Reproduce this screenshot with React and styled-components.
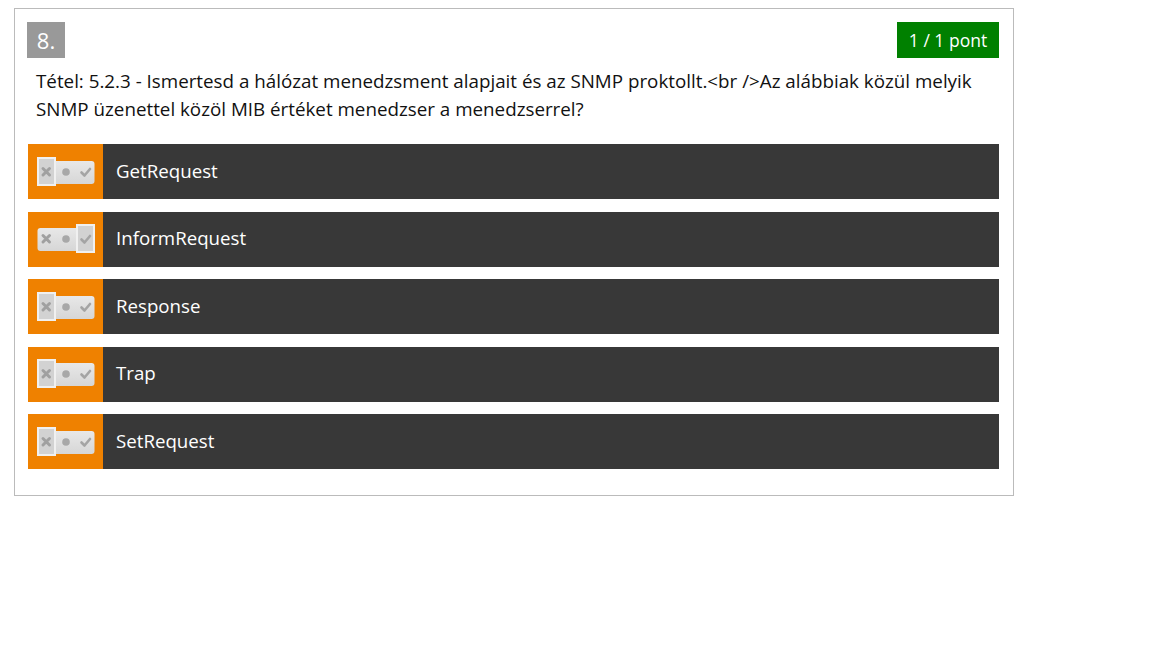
import React from "react";
import styled, { createGlobalStyle } from "styled-components";

const GlobalStyle = createGlobalStyle`
  body {
    margin: 0;
    background: #fff;
    font-family: "Open Sans", "Liberation Sans", sans-serif;
  }
`;

const Page = styled.div`
  padding: 8px 14px;
`;

const Card = styled.div`
  width: 1000px;
  box-sizing: border-box;
  border: 1px solid #bbbbbb;
  padding: 13px 14px 26px 13px;
`;

const Header = styled.div`
  display: flex;
  align-items: center;
  justify-content: space-between;
  height: 36px;
`;

const Number = styled.div`
  width: 38px;
  height: 36px;
  margin-left: -1px;
  background: #999999;
  color: #fff;
  font-size: 22px;
  display: flex;
  align-items: center;
  justify-content: center;
`;

const Points = styled.div`
  height: 36px;
  width: 102px;
  box-sizing: border-box;
  background: #008000;
  color: #fff;
  font-size: 17.5px;
  display: flex;
  align-items: center;
  justify-content: center;
`;

const Question = styled.div`
  margin: 9px 0 21px 8px;
  font-size: 18.8px;
  line-height: 28px;
  color: #111;
`;

const Answers = styled.div`
  display: flex;
  flex-direction: column;
  gap: 12.5px;
`;

const Answer = styled.div`
  display: flex;
  height: 55px;
  background: #383838;
  color: #fff;
  cursor: pointer;
`;

const Marker = styled.div`
  width: 75px;
  flex-shrink: 0;
  background: #ef8100;
  display: flex;
  align-items: center;
  justify-content: center;
`;

const Label = styled.div`
  display: flex;
  align-items: center;
  padding-left: 13px;
  padding-bottom: 3px;
  font-size: 18.7px;
`;

const Toggle = ({ state }) => (
  <svg width="58" height="30" viewBox="0 0 58 30">
    <defs>
      <linearGradient id="pill" x1="0" y1="0" x2="0" y2="1">
        <stop offset="0" stopColor="#e8e8e8" />
        <stop offset="1" stopColor="#d6d6d6" />
      </linearGradient>
    </defs>
    <rect x="0.5" y="4" width="57" height="23" rx="3" fill="url(#pill)" />
    {state === "no" && (
      <rect x="1" y="1" width="17" height="27" fill="#d2d2d2" stroke="#f0f0f0" strokeWidth="2" />
    )}
    {state === "yes" && (
      <rect x="40" y="1" width="17" height="27" fill="#d2d2d2" stroke="#f0f0f0" strokeWidth="2" />
    )}
    <path d="M6 11.5 L12.5 18 M12.5 11.5 L6 18" stroke="#a0a0a0" strokeWidth="3" strokeLinecap="round" />
    <circle cx="29" cy="15" r="3.8" fill="#a8a8a8" />
    <path d="M44.5 15.5 L47.5 18.5 L53 12" stroke="#a4a4a4" strokeWidth="2.6" fill="none" strokeLinecap="round" strokeLinejoin="round" />
  </svg>
);

const answers = [
  { text: "GetRequest", state: "no" },
  { text: "InformRequest", state: "yes" },
  { text: "Response", state: "no" },
  { text: "Trap", state: "no" },
  { text: "SetRequest", state: "no" },
];

export default function App() {
  return (
    <>
      <GlobalStyle />
      <Page>
        <Card>
          <Header>
            <Number>8.</Number>
            <Points>1 / 1 pont</Points>
          </Header>
          <Question>
            Tétel: 5.2.3 - Ismertesd a hálózat menedzsment alapjait és az SNMP
            proktollt.&lt;br /&gt;Az alábbiak közül melyik SNMP üzenettel közöl
            MIB értéket menedzser a menedzserrel?
          </Question>
          <Answers>
            {answers.map((a) => (
              <Answer key={a.text}>
                <Marker>
                  <Toggle state={a.state} />
                </Marker>
                <Label>{a.text}</Label>
              </Answer>
            ))}
          </Answers>
        </Card>
      </Page>
    </>
  );
}
